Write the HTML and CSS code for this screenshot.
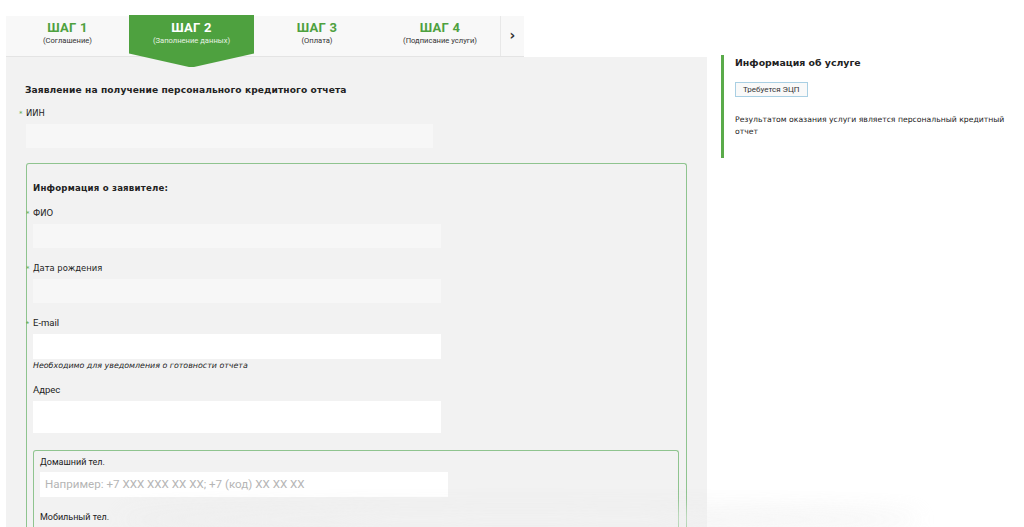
FILE: index.html
```html
<!DOCTYPE html>
<html lang="ru">
<head>
<meta charset="utf-8">
<title>Заявление</title>
<link rel="stylesheet" href="styles.css">
</head>
<body>
<div class="page">
  <main class="main">
    <nav class="steps">
      <div class="step"><div class="step-t">ШАГ 1</div><div class="step-s">(Соглашение)</div></div>
      <div class="step active"><div class="step-t">ШАГ 2</div><div class="step-s">(Заполнение данных)</div></div>
      <div class="step"><div class="step-t">ШАГ 3</div><div class="step-s">(Оплата)</div></div>
      <div class="step"><div class="step-t">ШАГ 4</div><div class="step-s">(Подписание услуги)</div></div>
      <div class="step-next">›</div>
    </nav>
    <section class="panel">
      <h1 class="title">Заявление на получение персонального кредитного отчета</h1>
      <div class="lbl req">ИИН</div>
      <div class="inp grey iin"></div>
      <div class="group">
        <div class="group-h">Информация о заявителе:</div>
        <div class="lbl req">ФИО</div>
        <div class="inp grey"></div>
        <div class="lbl req">Дата рождения</div>
        <div class="inp grey"></div>
        <div class="lbl lbl-n req">E-mail</div>
        <div class="inp white tight"></div>
        <div class="hint">Необходимо для уведомления о готовности отчета</div>
        <div class="lbl lbl-n">Адрес</div>
        <div class="inp white tall"></div>
        <div class="sub">
          <div class="lbl lbl-n">Домашний тел.</div>
          <div class="inp white ph">Например: +7 XXX XXX XX XX; +7 (код) XX XX XX</div>
          <div class="lbl lbl-n">Мобильный тел.</div>
        </div>
      </div>
    </section>
  </main>
  <aside class="side">
    <h2 class="side-h">Информация об услуге</h2>
    <span class="badge">Требуется ЭЦП</span>
    <p class="side-p">Результатом оказания услуги является персональный кредитный отчет</p>
  </aside>
</div>
<div class="fade"></div>
</body>
</html>
```

FILE: styles.css
```css
html, body {
  margin: 0;
  padding: 0;
  background: #ffffff;
  overflow: hidden;
  height: 527px;
}
body {
  font-family: "DejaVu Sans", Verdana, sans-serif;
  color: #222;
  position: relative;
}
.page {
  display: flex;
  align-items: flex-start;
  padding: 16px 0 0 6px;
}
.main {
  width: 701px;
  flex: none;
}
.steps {
  display: flex;
  width: 518px;
  height: 40px;
  background: #f8f8f8;
  border-bottom: 1px solid #e4e4e4;
}
.step {
  width: 123px;
  flex: none;
  text-align: center;
  padding-top: 4px;
  box-sizing: border-box;
  font-family: "Liberation Sans Narrow", "Roboto", sans-serif;
}
.step:nth-child(2) { width: 125px; }
.step:nth-child(3) { width: 126px; }
.step:nth-child(4) { width: 120px; }
.step-t {
  color: #4ea13f;
  font-weight: bold;
  font-size: 13px;
  line-height: 15px;
  letter-spacing: 0.3px;
}
.step-s {
  color: #333;
  font-size: 7.6px;
  line-height: 12px;
}
.step.active {
  position: relative;
  z-index: 2;
  background: #4ea13f;
  height: 52px;
  margin-top: -1px;
  padding-top: 5px;
  clip-path: polygon(0 0, 100% 0, 100% 74%, 52% 100%, 48% 100%, 0 74%);
}
.step.active .step-t { color: #fff; }
.step.active .step-s { color: #e6f2e2; }
.step-next {
  flex: 1;
  border-left: 1px solid #e8e8e8;
  text-align: center;
  font-size: 14px;
  line-height: 38px;
  font-weight: bold;
  color: #333;
}
.panel {
  background: #f2f2f2;
  padding: 26px 20px 0 20px;
  height: 470px;
  overflow: hidden;
  box-sizing: border-box;
}
.title {
  margin: 0 0 9px -1px;
  font-size: 9.1px;
  line-height: 14px;
  font-weight: bold;
  color: #222;
  letter-spacing: 0.1px;
}
.lbl {
  position: relative;
  font-size: 8.4px;
  line-height: 14px;
  color: #222;
  margin-bottom: 4px;
}
.lbl-n {
  font-family: "Liberation Sans Narrow", "Roboto", sans-serif;
  font-size: 9.5px;
}
.req::before {
  content: "*";
  position: absolute;
  left: -7px;
  top: 1px;
  color: #5aab4a;
  font-size: 7px;
}
.inp {
  width: 408px;
  height: 24px;
  margin-bottom: 13px;
  box-sizing: border-box;
}
.inp.iin { width: 407px; margin-bottom: 15px; }
.grey { background: #f7f7f7; }
.white { background: #ffffff; }
.tight { height: 25px; margin-bottom: 1px; }
.tall { height: 32px; margin-bottom: 17px; }
.hint {
  font-style: italic;
  font-size: 7.9px;
  line-height: 12px;
  margin-bottom: 11px;
}
.group {
  border: 1px solid #8fc48f;
  border-bottom: 0;
  border-radius: 3px 3px 0 0;
  padding: 17px 7px 0 6px;
  width: 661px;
  box-sizing: border-box;
  height: 364px;
}
.group-h {
  font-weight: bold;
  font-size: 8.6px;
  line-height: 14px;
  margin-bottom: 11px;
  letter-spacing: 0.2px;
}
.sub {
  border: 1px solid #8fc48f;
  border-bottom: 0;
  border-radius: 3px 3px 0 0;
  padding: 4px 6px 0 6px;
  height: 77px;
  box-sizing: border-box;
}
.sub .lbl { margin-bottom: 3px; font-size: 9px; }
.ph {
  font-family: "Liberation Sans Narrow", "Roboto", sans-serif;
  font-size: 11.6px;
  line-height: 25px;
  color: #b5b5b5;
  padding-left: 5px;
  height: 25px;
}
.side {
  margin: 39px 0 0 14px;
  border-left: 3px solid #5aab4a;
  padding: 1px 0 20px 11px;
  width: 300px;
  box-sizing: border-box;
}
.side-h {
  margin: 0;
  font-size: 9.4px;
  line-height: 14px;
  font-weight: bold;
  letter-spacing: 0;
}
.badge {
  display: inline-block;
  margin-top: 12px;
  border: 1px solid #a9cfe3;
  background: #f9f9f9;
  font-family: "Liberation Sans Narrow", "Roboto", sans-serif;
  font-size: 8px;
  line-height: 13px;
  padding: 0 7px;
  color: #333;
}
.side-p {
  margin: 17px 0 0;
  font-size: 7.7px;
  line-height: 12px;
}
.fade {
  position: absolute;
  left: 120px;
  width: 800px;
  top: 512px;
  height: 15px;
  background: #f6f6f6;
  filter: blur(10px);
  box-shadow: 0 0 18px rgba(0,0,0,0.12);
  border-radius: 50%;
  opacity: 0.9;
}
```
